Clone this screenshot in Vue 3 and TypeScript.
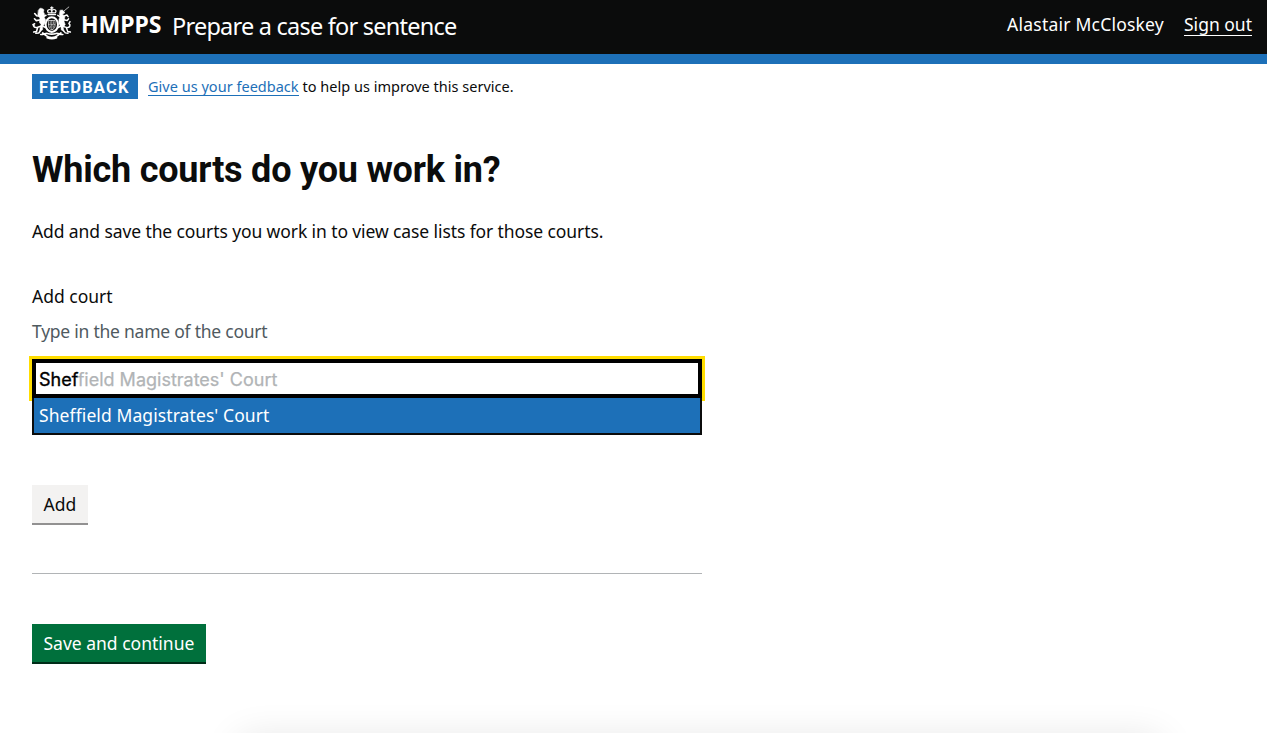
<script setup lang="ts">
import { ref, computed } from 'vue'

const userName = 'Alastair McCloskey'
const courts: string[] = ["Sheffield Magistrates' Court"]
const query = ref('Shef')
const matches = computed(() => courts.filter((c) => c.toLowerCase().startsWith(query.value.toLowerCase())))
const remainder = computed(() => (matches.value[0] ?? '').slice(query.value.length))
</script>

<template>
  <div class="page">
    <header class="header">
      <a class="brand">
        <svg class="crest" viewBox="0 0 40 34" width="40" height="34" fill="none" stroke="#fff" stroke-linecap="round" stroke-linejoin="round">
          <!-- crown -->
          <path d="M16.2 6.8c-1.6-2.6.5-4.2 3.6-2.6 3.1-1.6 5.2 0 3.6 2.6z" stroke-width="1.2" />
          <path d="M19.8 1v5.5M18.6 1.8h2.4M16 8.6h7.6" stroke-width="1.3" />
          <!-- garter and shield -->
          <ellipse cx="19.8" cy="18.6" rx="6.2" ry="7.3" stroke-width="2" />
          <path d="M16.6 14.5h6.4v5.4c0 2-1.4 3.2-3.2 4-1.8-.8-3.2-2-3.2-4z" stroke-width=".7" />
          <path d="M19.8 14.5v9M16.8 18.7h6M18.2 15.6v2M21.4 15.6v2M18.3 20v1.5M21.3 20v1.5" stroke-width=".6" />
          <!-- lion -->
          <path d="M6.4 4.2l1.6-2 2 .2 2 1.3-.5 2.2 1 2.2-.3 3.1 1.4 2.5-.8 4-2.1 2.5-.1 3.6-2.9 1.5.4-3.6 1-3.1-1.7-2.2.5-4.1-2-3.3z" fill="#fff" stroke-width=".5" />
          <path d="M8 10.2L4.6 9.7 2.7 7.5M7.6 14L4.3 14.6 2.5 12.8M9.5 20l-3.8 1.3-1.2 4.2-2.8.5M8.7 24.6l-1.9 2.4-3 .2M4.5 21.5C1.2 21.8.7 18.3 2.6 17.7M2 19.6l-1-1" stroke-width="1.6" />
          <path d="M11.5 10.5l2.5-1.2M10.7 20l2.8 1.5" stroke-width="1.5" />
          <!-- unicorn -->
          <path d="M36.8 1L31.6 5.3" stroke-width=".7" />
          <path d="M28.3 4.2l2.1-.2 2.6 2.6-1.4 1.2-1.2.1 2.4 3.1-.7 4.5 1.2 3.2-2.2 2.2.9 4.6-2.7-1.5-.4-3.3-2.2-3.2.2-4 1-2.7-.5-3.1z" fill="#fff" stroke-width=".5" />
          <path d="M31.6 10.2l3.3-1.2 1.2 1.7M31.8 13.8l3.4.7 1.4-1.7M30.5 20.2l3.8 1.2 1.4 4.1 2.7.5M31.3 24.4l2 2.5 2.7.3M34.7 21.6c3.4.2 4.2-2.8 2.2-4l1.1-2M28.3 11l-2.5-1.7M28.8 20l-2.7 1.5" stroke-width="1.45" />
          <!-- motto ribbon -->
          <path d="M8.8 28.5c3 .3 4.5-1.6 6.6-1 2.8.9 5.9.9 8.8 0 2.1-.6 3.5 1.3 6.6 1M10.7 27l3.4 2.6c3 2.5 8.2 2.5 11.4 0l3.4-2.6M15.2 31.6c3 1.3 6.4 1.3 9.3 0" stroke-width="1.7" />
        </svg>
        <span class="org">HMPPS</span>
        <span class="service">Prepare a case for sentence</span>
      </a>
      <nav class="account">
        <span class="user">{{ userName }}</span>
        <a class="signout">Sign out</a>
      </nav>
    </header>

    <div class="phase">
      <strong class="tag">FEEDBACK</strong>
      <span class="phase-text"><a class="link">Give us your feedback</a> to help us improve this service.</span>
    </div>

    <main class="main">
      <h1>Which courts do you work in?</h1>
      <p class="intro">Add and save the courts you work in to view case lists for those courts.</p>

      <label class="label">Add court</label>
      <div class="hint">Type in the name of the court</div>
      <div class="combo">
        <div class="field"><span class="typed">{{ query }}</span><span class="rest">{{ remainder }}</span></div>
        <ul class="options">
          <li v-for="court in matches" :key="court">{{ court }}</li>
        </ul>
      </div>
      <button class="btn secondary">Add</button>
      <hr />
      <button class="btn primary">Save and continue</button>
    </main>
    <div class="dock-clip"><div class="dock-shadow"></div></div>
  </div>
</template>

<style>
html, body { background: #fff; overflow: hidden; }
</style>

<style scoped>
.page {
  position: relative;
  height: 733px;
  overflow: hidden;
  color: #0b0c0c;
  font-family: "Noto Sans", "Open Sans", sans-serif;
  font-size: 17.5px;
  line-height: 25px;
  white-space: nowrap;
}
.header {
  display: flex;
  justify-content: space-between;
  box-sizing: border-box;
  height: 64px;
  padding: 0 15px 0 32px;
  background: #0b0c0c;
  border-bottom: 10px solid #1d70b8;
  color: #fff;
}
.brand { display: flex; }
.crest { margin-top: 6px; flex: none; }
.org { width: 81px; margin: 12px 0 0 9px; font-size: 23px; font-weight: 700; }
.service { margin: 14px 0 0 10px; font-size: 23.5px; letter-spacing: -0.77px; }
.account { display: flex; gap: 20px; padding-top: 12px; }
.user { letter-spacing: 0.22px; }
.signout { height: 23px; border-bottom: 1px solid #fff; }
.phase { display: flex; gap: 10px; padding: 10px 32px 0; }
.tag {
  box-sizing: border-box;
  width: 106px;
  height: 25px;
  padding-left: 7px;
  background: #1d70b8;
  color: #fff;
  font-family: Roboto, sans-serif;
  font-size: 16.5px;
  font-weight: 700;
  letter-spacing: 1.2px;
  line-height: 27px;
}
.phase-text { font-size: 14.5px; letter-spacing: 0.02px; }
.link { display: inline-block; height: 21px; border-bottom: 1px solid #1d70b8; color: #1d70b8; }
.main { width: 670px; padding: 46px 0 0 32px; }
h1 {
  margin: 0;
  font-family: Roboto, sans-serif;
  font-size: 36px;
  line-height: 50px;
  font-weight: 700;
  letter-spacing: -0.22px;
}
.intro { margin: 24px 0 0; letter-spacing: -0.1px; }
.label { display: block; margin-top: 40px; }
.hint { margin-top: 10px; color: #505a5f; letter-spacing: -0.24px; }
.combo { margin-top: 15px; }
.field {
  box-sizing: border-box;
  height: 39px;
  padding: 0 3px;
  border: 4px solid #000;
  box-shadow: 0 0 0 3px #fd0;
  font-family: Inter, "Liberation Sans", sans-serif;
  font-size: 18px;
  line-height: 33px;
  color: #000;
}
.rest { color: #b1b4b6; -webkit-text-stroke: 0.25px #b1b4b6; }
.typed { -webkit-text-stroke: 0.35px #000; }
.options {
  position: relative;
  box-sizing: border-box;
  height: 37px;
  margin: 0;
  padding: 0 5px;
  border: 2px solid #0b0c0c;
  border-top: 0;
  background: #1d70b8;
  color: #fff;
  list-style: none;
  line-height: 35px;
  letter-spacing: 0.09px;
}
.btn {
  display: block;
  box-sizing: border-box;
  height: 38px;
  padding: 0 0 0 11.5px;
  border: 0;
  text-align: left;
  font: inherit;
  line-height: 38px;
}
.secondary { width: 56px; margin-top: 50px; background: #f3f2f1; color: #0b0c0c; box-shadow: 0 2px 0 #929191; }
hr { height: 1px; margin: 50px 0; border: 0; background: #b1b4b6; }
.primary { width: 174px; background: #00703c; color: #fff; box-shadow: 0 2px 0 #002d18; }
.dock-clip { position: absolute; left: 0; right: 0; bottom: 0; height: 45px; overflow: hidden; pointer-events: none; }
.dock-shadow { height: 60px; margin: 50px 105px 0 238px; border-radius: 10px; box-shadow: 0 0 38px rgba(0, 0, 0, 0.11); }
</style>
